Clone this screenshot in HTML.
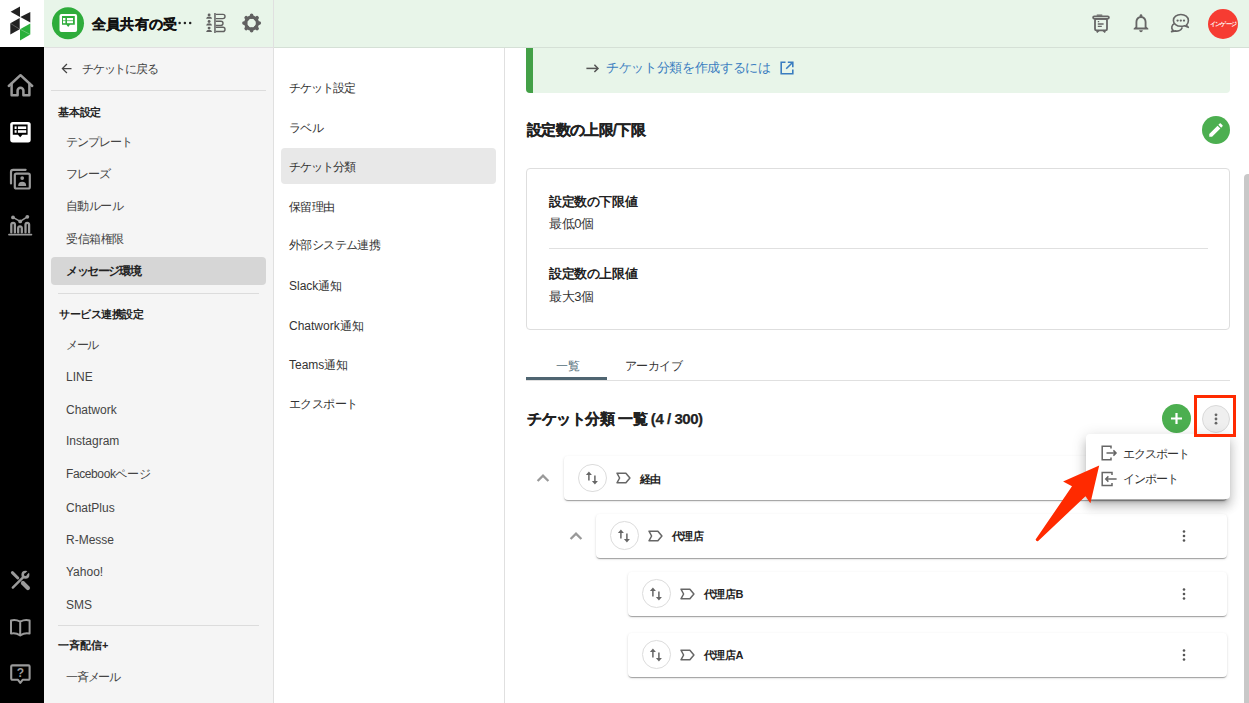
<!DOCTYPE html>
<html><head><meta charset="utf-8">
<style>
*{box-sizing:border-box;margin:0;padding:0}
html,body{width:1249px;height:703px;overflow:hidden;background:#fff}
body{position:relative;font-family:"Liberation Sans",sans-serif;color:#333}
.a{position:absolute}
.t{position:absolute;white-space:nowrap;line-height:16px;height:16px}
svg{position:absolute;overflow:visible}
</style></head><body>

<!-- rail -->
<div class="a" style="left:0;top:0;width:44px;height:703px;background:#000"></div>
<div class="a" style="left:0;top:0;width:44px;height:47px;background:#fff"></div>
<svg style="left:0;top:0" width="44" height="47">
<polygon points="20,6.4 10.6,11.7 20,17" fill="#222"/>
<polygon points="30.3,12 20.3,17 30.3,22.6" fill="#222"/>
<polygon points="19.7,18 10.3,23.3 10.3,34.5 19.7,29.2" fill="#222"/>
<polygon points="30.3,23.6 20,29.2 20,40.4 30.3,34.5" fill="#2ab03b"/>
<path d="M10.3 23.3 L19.7 29.2 M20 29.2 L30.3 34.5" stroke="rgba(255,255,255,0.55)" stroke-width="0.5"/>
</svg>


<!-- rail icons -->
<svg style="left:0;top:60px" width="44" height="190" viewBox="0 60 44 190" fill="none" stroke="#9a9a9a" stroke-width="2.2" stroke-linejoin="round" stroke-linecap="round">
<path d="M8.8 86 L20.5 75.2 L32.2 86" stroke-width="2.5"/>
<path d="M11.6 83.8 V95.2 H17.6 V90.6 A2.9 2.9 0 0 1 23.4 90.6 V95.2 H29.4 V83.8" stroke-width="2.5"/>
<rect x="10.2" y="121.9" width="20.5" height="20.5" rx="2.6" fill="#fff" stroke="none"/>
<path d="M12.8 124.5 H27.6 V134.7 H22.4 L20.2 137.2 L17.9 134.7 H12.8 Z" fill="#000" stroke="none"/>
<rect x="14.6" y="126.4" width="2" height="2.6" fill="#fff" stroke="none"/>
<rect x="17.9" y="126.4" width="8.3" height="2.6" fill="#fff" stroke="none"/>
<rect x="14.6" y="130.2" width="2" height="2.6" fill="#fff" stroke="none"/>
<rect x="17.9" y="130.2" width="8.3" height="2.6" fill="#fff" stroke="none"/>
<path d="M11 183.5 V172 A2.2 2.2 0 0 1 13.2 169.8 H25.6" stroke-width="2.2"/>
<rect x="14.8" y="173.6" width="15" height="14.9" rx="1.6" stroke-width="2.2"/>
<circle cx="22.2" cy="178.1" r="1.9" fill="#9a9a9a" stroke="none"/>
<path d="M18.2 186 A4 4.2 0 0 1 26.2 186 Z" fill="#9a9a9a" stroke="none"/>
<path d="M9 234.6 H31.4" stroke-width="1.8"/>
<path d="M11.3 232.4 V224.6 A1.8 1.8 0 0 1 14.9 224.6 V232.4" stroke-width="2.3"/>
<path d="M18.2 232.4 V228.2 A1.8 1.8 0 0 1 21.8 228.2 V232.4" stroke-width="2.3"/>
<path d="M25.5 232.4 V224.6 A1.8 1.8 0 0 1 29.1 224.6 V232.4" stroke-width="2.3"/>
<path d="M13 217.4 L20.2 221.4 L27.3 216.8" stroke-width="1.6"/>
<circle cx="13" cy="217.4" r="1.9" fill="#9a9a9a" stroke="none"/>
<circle cx="20.2" cy="221.4" r="1.9" fill="#9a9a9a" stroke="none"/>
<circle cx="27.3" cy="216.8" r="1.9" fill="#9a9a9a" stroke="none"/>
</svg>
<svg style="left:0;top:560px" width="44" height="130" viewBox="0 560 44 130" fill="none" stroke="#9a9a9a" stroke-width="2" stroke-linejoin="round" stroke-linecap="round">
<path d="M12.4 572.6 L17.8 578" stroke-width="3"/>
<path d="M22.9 583 L27.9 588" stroke-width="4.2"/>
<path d="M12.8 587.6 L22.8 577.6" stroke-width="2.4"/>
<circle cx="25.4" cy="574.7" r="2.7" stroke-width="2.6"/>
<path d="M25.6 574.5 L29.8 570.3" stroke="#000" stroke-width="2.3" stroke-linecap="butt"/>
<path d="M11 620.5 Q15.5 619.2 20.2 621.6 Q25 619.2 29.6 620.5 V633.6 Q25 632.4 20.2 635.4 Q15.5 632.4 11 633.6 Z M20.2 621.6 V635"/>
<path d="M12.4 665.4 H28.4 A1.2 1.2 0 0 1 29.6 666.6 V678.6 A1.2 1.2 0 0 1 28.4 679.8 H22.6 L20.3 682.8 L18 679.8 H12.4 A1.2 1.2 0 0 1 11.2 678.6 V666.6 A1.2 1.2 0 0 1 12.4 665.4 Z" stroke-width="2.1"/>
</svg>
<div class="t" style="left:13.8px;top:664.5px;width:13px;text-align:center;font-size:12px;font-weight:bold;color:#9a9a9a;line-height:16px">?</div>

<!-- header -->
<div class="a" style="left:44px;top:0;width:1205px;height:47px;background:#e8f5e9"></div>
<div class="a" style="left:44px;top:47px;width:1205px;height:1px;background:#d5e0d6"></div>
<div class="a" style="left:44px;top:47px;width:229px;height:1px;background:#e0e0e0"></div>

<!-- header app icon -->
<svg style="left:52px;top:7px" width="32" height="32" viewBox="52 7 32 32">
<circle cx="68" cy="23.3" r="16" fill="#2eac3b"/>
<rect x="59.5" y="14" width="17.6" height="18.1" rx="2" fill="#fff"/>
<path d="M62 16 H74.8 V24.7 H70 L68.2 27 L66.4 24.7 H62 Z" fill="#2eac3b"/>
<rect x="63" y="18" width="2.4" height="2.4" fill="#fff"/>
<rect x="67" y="18" width="6" height="2.4" fill="#fff"/>
<rect x="63" y="21.1" width="2.4" height="2.1" fill="#fff"/>
<rect x="67" y="21.1" width="6" height="2.1" fill="#fff"/>
</svg>
<div class="t" style="left:92px;top:13.5px;font-size:14px;line-height:20px;height:20px;font-weight:bold;color:#111;letter-spacing:0.2px;-webkit-text-stroke:0.3px #111">全員共有の受</div>
<svg style="left:178px;top:21px" width="14" height="4" viewBox="0 0 14 4" fill="#222"><circle cx="1.6" cy="2" r="1.25"/><circle cx="6.9" cy="2" r="1.25"/><circle cx="12.2" cy="2" r="1.25"/></svg>
<!-- list icon -->
<svg style="left:204px;top:11px" width="24" height="24" viewBox="204 11 24 24" fill="#616161">
<circle cx="209.1" cy="14.9" r="1.45"/><path d="M206.1 18.8 Q206.4 16.6 209.1 16.6 Q211.8 16.6 212.1 18.8 Z"/>
<circle cx="209.1" cy="21.5" r="1.45"/><path d="M206.1 25.4 Q206.4 23.2 209.1 23.2 Q211.8 23.2 212.1 25.4 Z"/>
<circle cx="209.1" cy="28.1" r="1.45"/><path d="M206.1 32 Q206.4 29.8 209.1 29.8 Q211.8 29.8 212.1 32 Z"/>
<rect x="214.2" y="13" width="1.5" height="20"/>
<path d="M215.7 14.4 H222.9 A2.1 2.1 0 0 1 222.9 18.6 H215.7" fill="none" stroke="#616161" stroke-width="1.4"/>
<path d="M215.7 21.2 H220.9 A2.1 2.1 0 0 1 220.9 25.4 H215.7" fill="none" stroke="#616161" stroke-width="1.4"/>
<path d="M215.7 27.3 H222.9 A2.1 2.1 0 0 1 222.9 31.5 H215.7" fill="none" stroke="#616161" stroke-width="1.4"/>
</svg>
<!-- gear -->
<svg style="left:240px;top:11px" width="24" height="24" viewBox="240 11 24 24" fill="none" stroke="#616161">
<circle cx="251.6" cy="23.1" r="5.9" stroke-width="3.2"/>
<g stroke-width="3.6" stroke-linecap="round"><path d="M257.60 23.10 L259.30 23.10"/><path d="M255.84 27.34 L257.04 28.54"/><path d="M251.60 29.10 L251.60 30.80"/><path d="M247.36 27.34 L246.16 28.54"/><path d="M245.60 23.10 L243.90 23.10"/><path d="M247.36 18.86 L246.16 17.66"/><path d="M251.60 17.10 L251.60 15.40"/><path d="M255.84 18.86 L257.04 17.66"/></g>
</svg>

<!-- header right icons -->
<svg style="left:1090px;top:12px" width="22" height="22" viewBox="1090 12 22 22" fill="none" stroke="#666" stroke-width="1.8" stroke-linejoin="round">
<rect x="1093.1" y="16.4" width="15.8" height="2.4" rx="1.2"/>
<rect x="1096.5" y="14.4" width="6" height="1.4" rx="0.7" fill="#666" stroke="none"/>
<rect x="1095" y="18.8" width="12" height="11.6" rx="1.6"/>
<path d="M1098.8 30.4 L1096.7 32.4 M1103.2 30.4 L1105.3 32.4" stroke-width="1.9"/>
<path d="M1097.8 21.6 H1099.2 M1097.8 24 H1103.6 M1097.8 26.3 H1101.8" stroke-width="1.3"/>
</svg>
<svg style="left:1130px;top:12px" width="22" height="22" viewBox="0 0 24 24">
<path fill="#666" d="M12 22c1.1 0 2-.9 2-2h-4c0 1.1.89 2 2 2zm6-6v-5c0-3.07-1.64-5.64-4.5-6.32V4c0-.83-.67-1.5-1.5-1.5s-1.5.67-1.5 1.5v.68C7.63 5.36 6 7.92 6 11v5l-2 2v1h16v-1l-2-2zm-2 1H8v-6c0-2.48 1.51-4.5 4-4.5s4 2.02 4 4.5v6z"/>
</svg>
<svg style="left:1169px;top:12px" width="22" height="22" viewBox="1169 12 22 22" fill="none" stroke="#666" stroke-width="1.6" stroke-linejoin="round">
<path d="M1174.6 23.6 C1171.6 24.8 1170.9 28.2 1172.9 30.1 L1171.5 31.7 L1175.2 30.9 C1178 31.6 1181.2 30.3 1182.3 27.4"/>
<path d="M1188.3 27.3 L1186.4 25.2 C1187.7 24 1188.4 22.3 1188.4 20.4 C1188.4 17.1 1185.1 14.5 1180.9 14.5 C1176.7 14.5 1173.4 17.1 1173.4 20.4 C1173.4 23.7 1176.7 26.3 1180.9 26.3 C1182.2 26.3 1183.4 26.1 1184.5 25.7 Z"/>
<circle cx="1177.6" cy="20.6" r="1.15" fill="#666" stroke="none"/>
<circle cx="1180.8" cy="20.6" r="1.15" fill="#666" stroke="none"/>
<circle cx="1184" cy="20.6" r="1.15" fill="#666" stroke="none"/>
</svg>
<div class="a" style="left:1208px;top:8.8px;width:30px;height:30px;border-radius:50%;background:#f63c32"></div>
<div class="t" style="left:1208px;top:19.5px;width:30px;text-align:center;font-size:6px;line-height:9px;height:9px;color:#fff;font-weight:bold;letter-spacing:-0.7px">インゲージ</div>

<!-- sidebar -->
<div class="a" style="left:44px;top:48px;width:229px;height:655px;background:#f5f5f5"></div>
<div class="a" style="left:273px;top:0;width:1px;height:703px;background:#e0e0e0"></div>


<!-- sidebar content -->
<svg style="left:59px;top:60.5px" width="15" height="15" viewBox="0 0 24 24"><path fill="#444" d="M20 11H7.83l5.59-5.59L12 4l-8 8 8 8 1.41-1.41L7.83 13H20v-2z"/></svg>
<div class="t" style="left:82px;top:61px;font-size:12px;color:#444;letter-spacing:-1.2px">チケットに戻る</div>
<div class="a" style="left:51px;top:90px;width:215px;height:1px;background:#dcdcdc"></div>
<div class="t" style="left:58px;top:104px;font-size:11px;font-weight:bold;color:#222;letter-spacing:-0.2px">基本設定</div>
<div class="t" style="left:66px;top:134px;font-size:12px;color:#444;letter-spacing:-1px">テンプレート</div>
<div class="t" style="left:66px;top:166px;font-size:12px;color:#444;letter-spacing:-1px">フレーズ</div>
<div class="t" style="left:66px;top:198px;font-size:12px;color:#444;letter-spacing:-0.6px">自動ルール</div>
<div class="t" style="left:66px;top:231px;font-size:12px;color:#444;letter-spacing:-0.4px">受信箱権限</div>
<div class="a" style="left:51px;top:257px;width:215px;height:28px;border-radius:4px;background:#d6d6d6"></div>
<div class="t" style="left:66px;top:263px;font-size:12px;font-weight:bold;color:#222;letter-spacing:-1.4px">メッセージ環境</div>
<div class="a" style="left:58px;top:293px;width:201px;height:1px;background:#dcdcdc"></div>
<div class="t" style="left:59px;top:306px;font-size:11px;font-weight:bold;color:#222;letter-spacing:-0.5px">サービス連携設定</div>
<div class="t" style="left:66px;top:337px;font-size:12px;color:#444;letter-spacing:-1.5px">メール</div>
<div class="t" style="left:66px;top:369px;font-size:12px;color:#444">LINE</div>
<div class="t" style="left:66px;top:401.5px;font-size:12px;color:#444">Chatwork</div>
<div class="t" style="left:66px;top:433px;font-size:12px;color:#444">Instagram</div>
<div class="t" style="left:66px;top:466px;font-size:12px;color:#444;letter-spacing:-0.4px">Facebookページ</div>
<div class="t" style="left:66px;top:499.5px;font-size:12px;color:#444">ChatPlus</div>
<div class="t" style="left:66px;top:531.5px;font-size:12px;color:#444">R-Messe</div>
<div class="t" style="left:66px;top:564px;font-size:12px;color:#444">Yahoo!</div>
<div class="t" style="left:66px;top:596.5px;font-size:12px;color:#444">SMS</div>
<div class="a" style="left:58px;top:625px;width:201px;height:1px;background:#dcdcdc"></div>
<div class="t" style="left:58px;top:637px;font-size:11px;font-weight:bold;color:#222">一斉配信+</div>
<div class="t" style="left:66px;top:669px;font-size:12px;color:#444;letter-spacing:-1.2px">一斉メール</div>

<!-- second nav -->
<div class="t" style="left:289px;top:80px;font-size:12px;color:#333;letter-spacing:-1px">チケット設定</div>
<div class="t" style="left:289px;top:120px;font-size:12px;color:#333;letter-spacing:-0.6px">ラベル</div>
<div class="a" style="left:281px;top:148px;width:215px;height:36px;border-radius:4px;background:#e8e8e8"></div>
<div class="t" style="left:289px;top:158.5px;font-size:12px;color:#333;letter-spacing:-1px">チケット分類</div>
<div class="t" style="left:289px;top:199px;font-size:12px;color:#333;letter-spacing:-0.6px">保留理由</div>
<div class="t" style="left:289px;top:237px;font-size:12px;color:#333;letter-spacing:-0.6px">外部システム連携</div>
<div class="t" style="left:289px;top:278.2px;font-size:12px;color:#333">Slack通知</div>
<div class="t" style="left:289px;top:318.2px;font-size:12px;color:#333">Chatwork通知</div>
<div class="t" style="left:289px;top:357.2px;font-size:12px;color:#333">Teams通知</div>
<div class="t" style="left:289px;top:396px;font-size:12px;color:#333;letter-spacing:-0.6px">エクスポート</div>

<!-- second nav border -->
<div class="a" style="left:504px;top:48px;width:1px;height:655px;background:#e0e0e0"></div>


<!-- main: banner -->
<div class="a" style="left:526px;top:48px;width:704px;height:45px;background:#e8f5e9;border-radius:0 0 4px 4px"></div>
<div class="a" style="left:526px;top:48px;width:7px;height:45px;background:#43a047;border-radius:0 0 0 4px"></div>
<svg style="left:585px;top:63px" width="15" height="11" viewBox="585 63 15 11" fill="none" stroke="#555" stroke-width="1.5"><path d="M586.4 68.4 H598"/><path d="M594.4 64.8 L598 68.4 L594.4 72"/></svg>
<div class="t" style="left:606px;top:60px;font-size:13px;color:#3a7dc0;letter-spacing:-0.35px">チケット分類を作成するには</div>
<svg style="left:779px;top:60px" width="16" height="16" viewBox="0 0 16 16" fill="none" stroke="#3a7dc0" stroke-width="1.6">
<path d="M6.5 2.2 H2.2 V13.8 H13.8 V9.5"/><path d="M8.8 2.2 H13.8 V7.2 M13.8 2.2 L7.2 8.8"/>
</svg>

<!-- headline -->
<div class="t" style="left:527px;top:121px;font-size:15px;line-height:18px;height:18px;font-weight:bold;-webkit-text-stroke:0.25px currentColor;color:#222;letter-spacing:-0.7px">設定数の上限/下限</div>
<div class="a" style="left:1202px;top:116px;width:28px;height:28px;border-radius:50%;background:#4caf50"></div>
<svg style="left:1207px;top:121px" width="18" height="18" viewBox="0 0 24 24"><path fill="#fff" d="M3 17.25V21h3.75L17.81 9.94l-3.75-3.75L3 17.25zM20.71 7.04c.39-.39.39-1.02 0-1.41l-2.34-2.34c-.39-.39-1.02-.39-1.41 0l-1.83 1.83 3.75 3.75 1.83-1.83z"/></svg>

<!-- limits card -->
<div class="a" style="left:526px;top:168px;width:704px;height:162px;border:1px solid #dedede;border-radius:4px"></div>
<div class="t" style="left:549px;top:194px;font-size:13px;font-weight:bold;color:#222;letter-spacing:-0.4px">設定数の下限値</div>
<div class="t" style="left:549px;top:216px;font-size:13px;color:#333;letter-spacing:-0.4px">最低0個</div>
<div class="a" style="left:549px;top:248px;width:659px;height:1px;background:#e0e0e0"></div>
<div class="t" style="left:549px;top:266px;font-size:13px;font-weight:bold;color:#222;letter-spacing:-0.4px">設定数の上限値</div>
<div class="t" style="left:549px;top:289px;font-size:13px;color:#333;letter-spacing:-0.4px">最大3個</div>

<!-- tabs -->
<div class="t" style="left:556px;top:358px;font-size:12px;color:#546e7a">一覧</div>
<div class="t" style="left:625px;top:358px;font-size:12px;color:#333;letter-spacing:-0.6px">アーカイブ</div>
<div class="a" style="left:526px;top:380px;width:704px;height:1px;background:#e0e0e0"></div>
<div class="a" style="left:526px;top:377px;width:81px;height:3px;background:#4f6571"></div>

<!-- list title -->
<div class="t" style="left:527px;top:410px;font-size:15px;line-height:18px;height:18px;font-weight:bold;-webkit-text-stroke:0.25px currentColor;color:#222;letter-spacing:-0.45px">チケット分類 一覧 (4 / 300)</div>
<div class="a" style="left:1162px;top:404px;width:29px;height:29px;border-radius:50%;background:#4caf50"></div>
<svg style="left:1162px;top:404px" width="29" height="29" viewBox="0 0 29 29"><path d="M14.5 9 V20 M9 14.5 H20" stroke="#fff" stroke-width="2.2"/></svg>
<div class="a" style="left:1202px;top:404.5px;width:28px;height:28px;border-radius:50%;background:#efefef;border:1px solid #dadada"></div>
<svg style="left:1202px;top:404.5px" width="28" height="28" viewBox="0 0 28 28" fill="#666"><circle cx="14" cy="9.8" r="1.4"/><circle cx="14" cy="14" r="1.4"/><circle cx="14" cy="18.2" r="1.4"/></svg>
<!-- tree -->
<svg style="left:536px;top:471px" width="14" height="14" viewBox="0 0 14 14"><path d="M1.6 10 L7 4.6 L12.4 10" fill="none" stroke="#999" stroke-width="2.3"/></svg>
<div class="a" style="left:564px;top:456px;width:663px;height:44px;border-radius:4px;background:#fff;box-shadow:0 2px 1px -1px rgba(0,0,0,.2),0 1px 1px 0 rgba(0,0,0,.14),0 1px 3px 0 rgba(0,0,0,.12)"></div>
<div class="a" style="left:578.0px;top:463.6px;width:28.8px;height:28.8px;border-radius:50%;border:1px solid #dcdcdc"></div>
<svg style="left:584.4px;top:470px" width="16" height="16" viewBox="0 0 16 16" fill="#666" stroke="#666" stroke-width="1.5"><path d="M4.9 10.6 V3.6" fill="none"/><path d="M1.9 5.1 L4.9 1.4 L7.9 5.1 Z" stroke="none"/><path d="M10.9 5.4 V12.4" fill="none"/><path d="M7.9 10.9 L10.9 14.6 L13.9 10.9 Z" stroke="none"/></svg>
<svg style="left:615.5px;top:472px" width="15" height="12" viewBox="0 0 15 12" fill="none" stroke="#666" stroke-width="1.5" stroke-linejoin="round"><path d="M1 1.2 H9.9 L13.9 6 L9.9 10.8 H1 L3.6 6 Z"/></svg>
<div class="t" style="left:639.5px;top:470.5px;font-size:11px;font-weight:bold;color:#222;letter-spacing:-0.3px">経由</div>
<svg style="left:1177.6px;top:470px" width="12" height="16" viewBox="0 0 12 16" fill="#555"><circle cx="6" cy="3.5" r="1.3"/><circle cx="6" cy="8" r="1.3"/><circle cx="6" cy="12.5" r="1.3"/></svg>
<svg style="left:568.6px;top:528.5px" width="14" height="14" viewBox="0 0 14 14"><path d="M1.6 10 L7 4.6 L12.4 10" fill="none" stroke="#999" stroke-width="2.3"/></svg>
<div class="a" style="left:596px;top:513.5px;width:631px;height:44px;border-radius:4px;background:#fff;box-shadow:0 2px 1px -1px rgba(0,0,0,.2),0 1px 1px 0 rgba(0,0,0,.14),0 1px 3px 0 rgba(0,0,0,.12)"></div>
<div class="a" style="left:610.0px;top:521.1px;width:28.8px;height:28.8px;border-radius:50%;border:1px solid #dcdcdc"></div>
<svg style="left:616.4px;top:527.5px" width="16" height="16" viewBox="0 0 16 16" fill="#666" stroke="#666" stroke-width="1.5"><path d="M4.9 10.6 V3.6" fill="none"/><path d="M1.9 5.1 L4.9 1.4 L7.9 5.1 Z" stroke="none"/><path d="M10.9 5.4 V12.4" fill="none"/><path d="M7.9 10.9 L10.9 14.6 L13.9 10.9 Z" stroke="none"/></svg>
<svg style="left:647.5px;top:529.5px" width="15" height="12" viewBox="0 0 15 12" fill="none" stroke="#666" stroke-width="1.5" stroke-linejoin="round"><path d="M1 1.2 H9.9 L13.9 6 L9.9 10.8 H1 L3.6 6 Z"/></svg>
<div class="t" style="left:671.5px;top:528.0px;font-size:11px;font-weight:bold;color:#222;letter-spacing:-0.3px">代理店</div>
<svg style="left:1177.6px;top:527.5px" width="12" height="16" viewBox="0 0 12 16" fill="#555"><circle cx="6" cy="3.5" r="1.3"/><circle cx="6" cy="8" r="1.3"/><circle cx="6" cy="12.5" r="1.3"/></svg>
<div class="a" style="left:628px;top:571.5px;width:599px;height:44px;border-radius:4px;background:#fff;box-shadow:0 2px 1px -1px rgba(0,0,0,.2),0 1px 1px 0 rgba(0,0,0,.14),0 1px 3px 0 rgba(0,0,0,.12)"></div>
<div class="a" style="left:642.0px;top:579.1px;width:28.8px;height:28.8px;border-radius:50%;border:1px solid #dcdcdc"></div>
<svg style="left:648.4px;top:585.5px" width="16" height="16" viewBox="0 0 16 16" fill="#666" stroke="#666" stroke-width="1.5"><path d="M4.9 10.6 V3.6" fill="none"/><path d="M1.9 5.1 L4.9 1.4 L7.9 5.1 Z" stroke="none"/><path d="M10.9 5.4 V12.4" fill="none"/><path d="M7.9 10.9 L10.9 14.6 L13.9 10.9 Z" stroke="none"/></svg>
<svg style="left:679.5px;top:587.5px" width="15" height="12" viewBox="0 0 15 12" fill="none" stroke="#666" stroke-width="1.5" stroke-linejoin="round"><path d="M1 1.2 H9.9 L13.9 6 L9.9 10.8 H1 L3.6 6 Z"/></svg>
<div class="t" style="left:703.5px;top:586.0px;font-size:11px;font-weight:bold;color:#222;letter-spacing:-0.3px">代理店B</div>
<svg style="left:1177.6px;top:585.5px" width="12" height="16" viewBox="0 0 12 16" fill="#555"><circle cx="6" cy="3.5" r="1.3"/><circle cx="6" cy="8" r="1.3"/><circle cx="6" cy="12.5" r="1.3"/></svg>
<div class="a" style="left:628px;top:632.5px;width:599px;height:44px;border-radius:4px;background:#fff;box-shadow:0 2px 1px -1px rgba(0,0,0,.2),0 1px 1px 0 rgba(0,0,0,.14),0 1px 3px 0 rgba(0,0,0,.12)"></div>
<div class="a" style="left:642.0px;top:640.1px;width:28.8px;height:28.8px;border-radius:50%;border:1px solid #dcdcdc"></div>
<svg style="left:648.4px;top:646.5px" width="16" height="16" viewBox="0 0 16 16" fill="#666" stroke="#666" stroke-width="1.5"><path d="M4.9 10.6 V3.6" fill="none"/><path d="M1.9 5.1 L4.9 1.4 L7.9 5.1 Z" stroke="none"/><path d="M10.9 5.4 V12.4" fill="none"/><path d="M7.9 10.9 L10.9 14.6 L13.9 10.9 Z" stroke="none"/></svg>
<svg style="left:679.5px;top:648.5px" width="15" height="12" viewBox="0 0 15 12" fill="none" stroke="#666" stroke-width="1.5" stroke-linejoin="round"><path d="M1 1.2 H9.9 L13.9 6 L9.9 10.8 H1 L3.6 6 Z"/></svg>
<div class="t" style="left:703.5px;top:647.0px;font-size:11px;font-weight:bold;color:#222;letter-spacing:-0.3px">代理店A</div>
<svg style="left:1177.6px;top:646.5px" width="12" height="16" viewBox="0 0 12 16" fill="#555"><circle cx="6" cy="3.5" r="1.3"/><circle cx="6" cy="8" r="1.3"/><circle cx="6" cy="12.5" r="1.3"/></svg>

<!-- menu -->
<div class="a" style="left:1086px;top:433.5px;width:144px;height:65.5px;background:#fff;border-radius:4px;box-shadow:0 5px 5px -3px rgba(0,0,0,0.2),0 8px 10px 1px rgba(0,0,0,0.14),0 3px 14px 2px rgba(0,0,0,0.12)"></div>
<svg style="left:1100px;top:444px" width="18" height="18" viewBox="0 0 18 18" fill="none" stroke="#666" stroke-width="1.5">
<path d="M11 4.5 V2.2 H2.2 V15.8 H11 V13.5"/><path d="M6.5 9 H16 M13.4 6.4 L16 9 L13.4 11.6"/>
</svg>
<div class="t" style="left:1122.5px;top:445.5px;font-size:12px;color:#333;letter-spacing:-1px">エクスポート</div>
<svg style="left:1100px;top:469.5px" width="18" height="18" viewBox="0 0 18 18" fill="none" stroke="#666" stroke-width="1.5">
<path d="M12 5 V2.4 H2.2 V15.6 H12 V13"/><path d="M16.6 9 H5.8 M8.4 6.4 L5.8 9 L8.4 11.6"/>
</svg>
<div class="t" style="left:1122.5px;top:471px;font-size:12px;color:#333;letter-spacing:-1px">インポート</div>

<div class="a" style="left:1194px;top:395px;width:42px;height:42px;border:3px solid #ff2a00"></div>
<!-- red arrow -->
<svg style="left:1030px;top:460px" width="80" height="90" viewBox="1030 460 80 90">
<path d="M1099.2 465.4 L1063.1 481.6 L1072 486.3 L1035.6 539.6 Q1036.2 541.8 1038.2 541 L1085.5 496.2 L1090.4 503.3 Z" fill="#ff2a00"/>
</svg>

<!-- scrollbar -->
<div class="a" style="left:1244px;top:174px;width:8px;height:540px;border-radius:4px;background:#c8c8c8"></div>

</body></html>
